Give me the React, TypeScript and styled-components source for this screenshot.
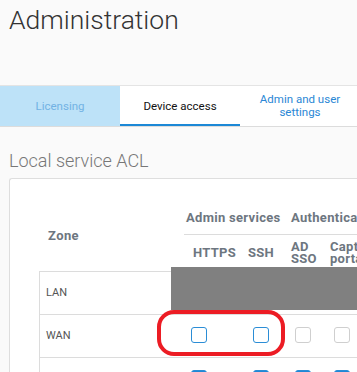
import React from "react";
import styled, { createGlobalStyle } from "styled-components";

const GlobalStyle = createGlobalStyle`
  html, body { margin: 0; padding: 0; }
  body {
    background: #fafafa;
    font-family: Roboto, "Liberation Sans", Arial, sans-serif;
    overflow: hidden;
  }
  * { box-sizing: border-box; }
`;

const Page = styled.div`
  width: 357px;
  height: 372px;
  overflow: hidden;
  background: #fafafa;
`;

const Header = styled.header`
  height: 85px;
  padding: 5px 9px 0;
`;

const Title = styled.h1`
  margin: 0;
  font-size: 26.5px;
  line-height: 30px;
  font-weight: 300;
  color: #333;
`;

const TabBar = styled.nav`
  display: flex;
  height: 42px;
  background: #fff;
  border-top: 1px solid #e4e4e4;
  border-bottom: 1px solid #dcdcdc;
`;

type Tone = "muted" | "active" | "link";

const Tab = styled.div<{ $tone: Tone }>`
  flex: none;
  width: 120px;
  padding: 0 10px;
  display: flex;
  align-items: center;
  justify-content: center;
  text-align: center;
  font-size: 11.5px;
  line-height: 12.6px;
  background: ${(p) => (p.$tone === "muted" ? "#bde2f8" : "#fff")};
  color: ${(p) =>
    p.$tone === "muted" ? "#72b2e4" : p.$tone === "active" ? "#111" : "#2a87d5"};
  box-shadow: ${(p) => (p.$tone === "active" ? "inset 0 -2px 0 #1c88d6" : "none")};
`;

const Content = styled.main`
  padding-left: 9px;
`;

const SectionTitle = styled.h2`
  margin: 23px 0 7px;
  font-size: 18px;
  line-height: 21px;
  font-weight: 300;
  color: #777;
`;

const Card = styled.section`
  position: relative;
  background: #fff;
  border: 1px solid #dedede;
  border-right: none;
  border-radius: 3px 0 0 0;
  padding: 21px 0 0 29px;
  height: 240px;
`;

const Grid = styled.div`
  display: grid;
  grid-template-columns: 145px 60px 42px 40px 80px 80px;
  width: 460px;
`;

const ZoneHead = styled.div`
  grid-row: span 2;
  display: flex;
  align-items: center;
  padding-left: 9px;
  font-size: 13px;
  font-weight: 700;
  letter-spacing: 0.4px;
  color: #6d7680;
`;

const GroupHead = styled.div<{ $span: number; $pad: number }>`
  grid-column: span ${(p) => p.$span};
  height: 35px;
  display: flex;
  align-items: center;
  padding-left: ${(p) => p.$pad}px;
  border-bottom: 1px solid #dcdcdc;
  font-size: 13px;
  font-weight: 700;
  letter-spacing: 0.3px;
  color: #6d7680;
  white-space: nowrap;
  overflow: hidden;
`;

const ColHead = styled.div<{ $pad: number }>`
  height: 36px;
  display: flex;
  align-items: center;
  padding-left: ${(p) => p.$pad}px;
  font-size: 13px;
  line-height: 12.4px;
  font-weight: 700;
  letter-spacing: 0.3px;
  color: #6d7680;
  overflow: hidden;
`;

const Cell = styled.div<{ $first?: boolean; $pad: number }>`
  height: 43px;
  display: flex;
  align-items: center;
  padding-left: ${(p) => p.$pad}px;
  padding-bottom: 2px;
  border-top: 1px solid #dcdcdc;
  border-left: ${(p) => (p.$first ? "1px solid #dcdcdc" : "none")};
  font-size: 11px;
  color: #555;
`;

const Box = styled.span<{ $checked: boolean; $enabled: boolean }>`
  display: block;
  width: 16px;
  height: 16px;
  border-radius: 3px;
  border: 1.5px solid
    ${(p) => (p.$checked || p.$enabled ? "#2b8dd6" : "#cfcfcf")};
  background: ${(p) => (p.$checked ? "#1f87d6" : "#fff")};
`;

const Redaction = styled.div`
  position: absolute;
  left: 161px;
  top: 88px;
  width: 200px;
  height: 43px;
  background: #808080;
`;

const Highlight = styled.div`
  position: absolute;
  left: 147px;
  top: 131px;
  width: 128px;
  height: 46px;
  border: 4px solid #ec1c24;
  border-radius: 17px;
`;

const columns = [
  { label: "HTTPS", head: 9, box: 7, admin: true },
  { label: "SSH", head: 4, box: 9, admin: true },
  { label: "AD SSO", head: 5, box: 9, admin: false },
  { label: "Captive portal", head: 4, box: 8, admin: false },
  { label: "Radius SSO", head: 4, box: 8, admin: false },
];

const rows = [
  { zone: "LAN", values: [true, true, true, true, true] },
  { zone: "WAN", values: [false, false, false, false, false] },
  { zone: "DMZ", values: [true, true, true, true, true] },
];

export default function App() {
  return (
    <Page>
      <GlobalStyle />
      <Header>
        <Title>Administration</Title>
      </Header>
      <TabBar>
        <Tab $tone="muted">Licensing</Tab>
        <Tab $tone="active">Device access</Tab>
        <Tab $tone="link">Admin and user settings</Tab>
      </TabBar>
      <Content>
        <SectionTitle>Local service ACL</SectionTitle>
        <Card>
          <Grid>
            <ZoneHead>Zone</ZoneHead>
            <GroupHead $span={2} $pad={2}>
              Admin services
            </GroupHead>
            <GroupHead $span={3} $pad={5}>
              Authentication
            </GroupHead>
            {columns.map((c) => (
              <ColHead key={c.label} $pad={c.head}>
                {c.label}
              </ColHead>
            ))}
            {rows.map((r) => (
              <React.Fragment key={r.zone}>
                <Cell $first $pad={6}>
                  {r.zone}
                </Cell>
                {columns.map((c, i) => (
                  <Cell key={c.label} $pad={c.box}>
                    <Box
                      $checked={r.values[i]}
                      $enabled={c.admin || r.values[i]}
                    />
                  </Cell>
                ))}
              </React.Fragment>
            ))}
          </Grid>
          <Redaction />
          <Highlight />
        </Card>
      </Content>
    </Page>
  );
}
